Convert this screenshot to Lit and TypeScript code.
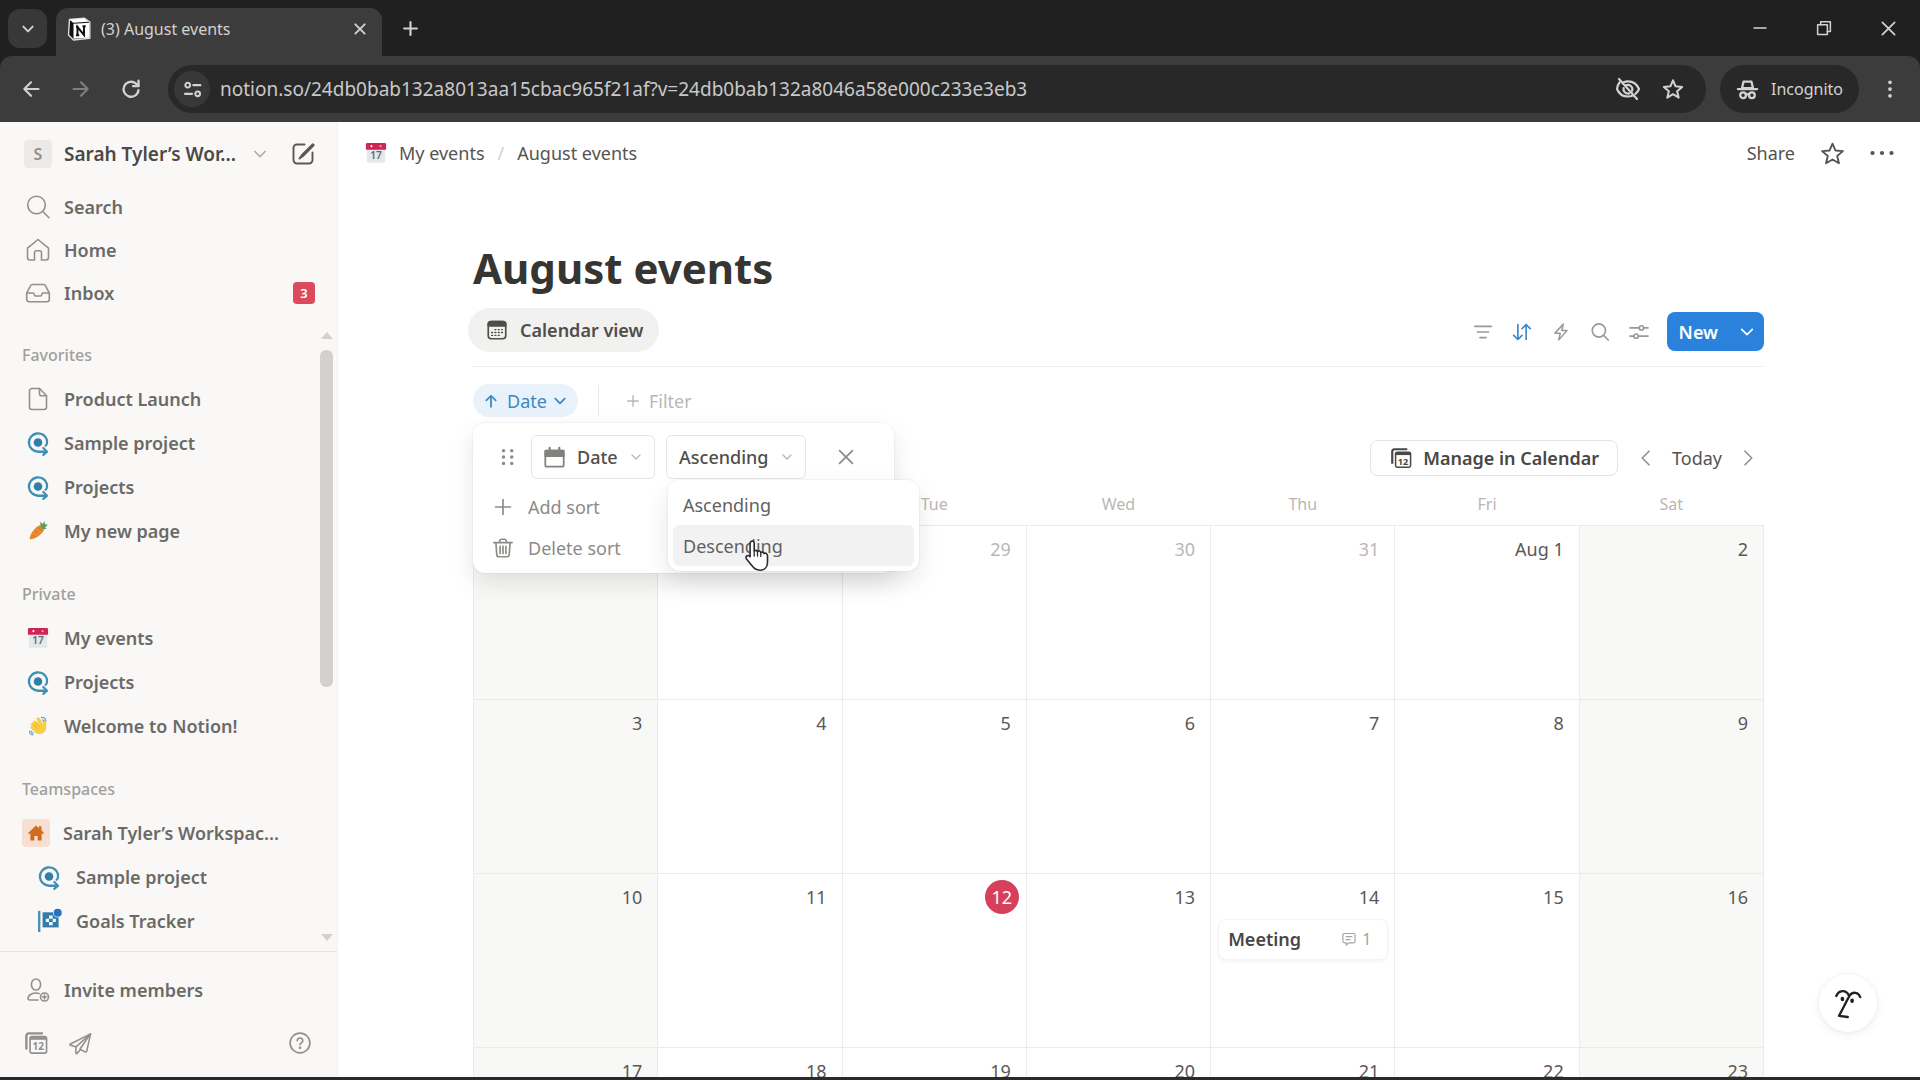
import { LitElement, html, css, svg, nothing, TemplateResult } from "lit";
import { customElement, property } from "lit/decorators.js";
import { classMap } from "lit/directives/class-map.js";

/* ---------- Icons: all drawn on a 24 x 24 grid ---------- */
const ICONS: Record<string, TemplateResult> = {
  chevron: svg`<path d="M4 8l8 8 8-8"/>`,
  left: svg`<path d="M16 3l-9 9 9 9"/>`,
  right: svg`<path d="M8 3l9 9-9 9"/>`,
  close: svg`<path d="M5 5l14 14M19 5L5 19"/>`,
  plus: svg`<path d="M12 3v18M3 12h18"/>`,
  back: svg`<path d="M21 12H4M12 4l-8 8 8 8"/>`,
  forward: svg`<path d="M3 12h17M12 4l8 8-8 8"/>`,
  reload: svg`<path d="M21 13.500a9 9 0 1 1-3-8L21 8"/><path d="M21 2v6.500h-6.500"/>`,
  tune: svg`<circle cx="6" cy="6.500" r="3"/><path d="M13 6.500h9M2.500 17.500h9"/><circle cx="18.500" cy="17.500" r="3"/>`,
  eyeOff: svg`<path d="M3.500 5.500C2 7.500 1.200 9.500 1 12c2 5 6 7.500 11 7.500 2 0 3.500-.4 5-1M8 5c1.200-.4 2.600-.6 4-.6 5 0 9 3 11 7.600-.8 2-2 3.600-3.600 4.900"/><path d="M10 8.300a4.500 4.500 0 0 1 6.200 5.300M7.600 11a4.500 4.500 0 0 0 5.600 5.400"/><path d="M3 2l18 20"/>`,
  star: svg`<path d="M12 2.500l2.800 6.600 7.200.6-5.500 4.700 1.700 7L12 17.700l-6.200 3.700 1.700-7L2 9.700l7.200-.6z"/>`,
  incognito: svg`<path d="M7.500 3h9l1.800 7.500H5.700z"/><path d="M1 11.500h22"/><circle cx="7" cy="18.500" r="3.300"/><circle cx="17" cy="18.500" r="3.300"/><path d="M10 18c1.200-.8 2.800-.8 4 0"/>`,
  minimize: svg`<path d="M4 12h16"/>`,
  restore: svg`<path d="M3.500 7.500h13v13h-13z"/><path d="M7.500 7.500v-4h13v13h-4"/>`,
  kebab: svg`<g fill="currentColor" stroke="none"><circle cx="12" cy="3" r="2.500"/><circle cx="12" cy="12" r="2.500"/><circle cx="12" cy="21" r="2.500"/></g>`,
  dots: svg`<g fill="currentColor" stroke="none"><circle cx="2.500" cy="12" r="2.100"/><circle cx="12" cy="12" r="2.100"/><circle cx="21.500" cy="12" r="2.100"/></g>`,
  compose: svg`<path d="M13.500 2.500H6A3.500 3.500 0 0 0 2.500 6v12A3.500 3.500 0 0 0 6 21.500h12a3.500 3.500 0 0 0 3.500-3.500v-7.500"/><path d="M21.800 2.200L11 13l-2.500 3.500L12 14 22.800 3.200z"/>`,
  search: svg`<circle cx="10.500" cy="10" r="8.800"/><path d="M16.800 16.500l6.200 6.200"/>`,
  home: svg`<path d="M1.500 10.200L12 1.500l10.500 8.700v9.100c0 1.600-1 2.700-2.600 2.700h-4.400v-7.500c0-1-.6-1.700-1.500-1.700h-4c-.9 0-1.500.7-1.500 1.700V22H4.100c-1.600 0-2.600-1.100-2.600-2.700z"/>`,
  inbox: svg`<path d="M.7 12l3.500-6.700A3 3 0 0 1 6.900 3.500h10.200a3 3 0 0 1 2.700 1.800l3.500 6.700v6.300a2.500 2.500 0 0 1-2.500 2.500H3.200A2.500 2.500 0 0 1 .7 18.300z"/><path d="M.7 12h6.800L9 15h6l1.500-3h6.800"/>`,
  page: svg`<path d="M13.500 1.500H6A2.500 2.500 0 0 0 3.500 4v16A2.500 2.500 0 0 0 6 22.500h12a2.500 2.500 0 0 0 2.500-2.500V8.800z"/><path d="M13.500 1.500v5.300a2 2 0 0 0 2 2h5"/>`,
  target: svg`<g stroke="#3f8fb5"><path d="M21.800 9A10 10 0 1 0 12 21.500h9" stroke-width="2.600"/><path d="M17.800 17.500l4 4-4 3.500M21.800 9.500V12a4 4 0 0 1-1.500 3" stroke-width="2.400"/></g><circle cx="12" cy="11.500" r="4.700" fill="#337ea9" stroke="none"/>`,
  carrot: svg`<g stroke="none"><path d="M14.500 4.800l5 5c-1 5-9.500 11.200-16.200 12.200-1 .1-1.500-.5-1.300-1.500C3.300 13.800 9.800 6.200 14.500 4.800z" fill="#ea8a2e"/><path d="M9 12l3 3M12.500 8l3 3M6 17l2 2" stroke="#c96a14" stroke-width="1"/><path d="M15 6.500L14.800 1l3 2.500L20 0l.5 4L24 4.500l-3.500 3 2 2-5.500.2z" fill="#5f9f52"/></g>`,
  wave: svg`<g stroke="none"><path d="M6 7.500l2-2.500 4 3-2-5.500 3-.9 5 7.100.9-3.300c2-.2 3 .8 3.100 3.500l-.2 6.500c-.8 5.100-8 8.500-13 4.700L2.600 14l1.600-2.200L3 10.300l1.700-2.100z" fill="#f7ce46"/><path d="M7 11l4.500 4.500M9 8.500l4.500 4.500" stroke="#dda92a" stroke-width="1"/></g><path d="M16 1.800c3-.3 5 1.300 5.500 4M17 4.500c1.200 0 2 .8 2.200 2M1.800 18c0 2.800 1.200 4.200 4 4.600M4 18c0 1.500.8 2.300 2.200 2.500" stroke="#6ea3c8" stroke-width="1.500"/>`,
  house: svg`<path d="M12 2l4 3.500V3h3.200v5.300L22.500 12l-1.300 1.500-1.700-1.200V22h-5.300v-6H9.800v6H4.500v-9.700l-1.700 1.200L1.500 12z" fill="#cf6d1c" stroke="none"/>`,
  flag: svg`<g stroke="none"><path d="M0 1h2.600v23H0z" fill="#4c8fb3"/><path d="M5 2.500h17.500v16.500H5z" fill="#337ea9"/><g fill="#f4f8fa"><path d="M8.500 9.500h3.500v3.500H8.500zM12 6h4v3.500h-4zM16 9.500h3.500v3.500H16zM12 13h4v3.500h-4z"/></g><circle cx="21.500" cy="3" r="5.200" fill="#f9f8f7"/><circle cx="21.500" cy="3" r="4.400" fill="#2a72c4"/></g>`,
  invite: svg`<ellipse cx="10" cy="6.500" rx="4.600" ry="5.500"/><path d="M13 15.500c-5.500-1.500-11 1-11 5 0 1 .6 1.500 1.700 1.500H12"/><circle cx="18.500" cy="19" r="4"/><path d="M18.500 17v4M16.500 19h4"/>`,
  send: svg`<path d="M22.500 2L1.500 12.500c-.7.400-.6 1 .1 1.300l5.600 1.700v6.300c0 .8.700 1 1.200.5l3.600-4 4.800 2.500c.8.400 1.500.1 1.700-.8L22.500 2z"/><path d="M22.500 2L7.200 15.500M22 2.500L11.500 17.800"/>`,
  help: svg`<circle cx="12" cy="12" r="10.800"/><path d="M9 9.600A3 3 0 0 1 15 9.500c0 2.300-3 2.400-3 4.500"/><circle cx="12" cy="17.300" r=".6" fill="currentColor"/>`,
  calendarView: svg`<rect x="1.500" y="2" width="21" height="20.500" rx="3.500"/><path d="M1.500 7V5.500A3.500 3.500 0 0 1 5 2h14a3.500 3.500 0 0 1 3.500 3.500V7z" fill="currentColor"/><path d="M9.500 11.500h1.200M13.500 11.500h1.200M17.500 11.500h1M5.500 15h1.200M9.500 15h1.200M13.500 15h1.200M17.500 15h1M5.500 18.500h1.200M9.500 18.500h1.200M13.500 18.500h1.200" stroke-width="1.600"/>`,
  calendar: svg`<rect x="1.500" y="4" width="21" height="18.500" rx="2"/><path d="M1.500 4h21v6.500h-21z" fill="currentColor"/><path d="M6.500 1v4M17.500 1v4" stroke-width="2.400"/>`,
  filter: svg`<path d="M1 4.500h22M4.500 12h15M8 19.500h8"/>`,
  sort: svg`<path d="M6.500 2v20M1 16.500L6.500 22l5.500-5.500M17.500 22V2M12 7.500L17.500 2 23 7.500"/>`,
  bolt: svg`<path d="M15 1.500L4 13.500h7L9 22.500l11-12.500h-7z"/>`,
  sliders: svg`<path d="M0 6.500h12M18.500 6.500H24M0 17.500h5M11.500 17.500H24"/><circle cx="15.200" cy="6.500" r="2.800"/><circle cx="8.200" cy="17.500" r="2.800"/>`,
  up: svg`<path d="M12 22V3M4 11l8-8 8 8"/>`,
  drag: svg`<g fill="currentColor" stroke="none"><circle cx="6" cy="3.500" r="2.300"/><circle cx="6" cy="12" r="2.300"/><circle cx="6" cy="20.500" r="2.300"/><circle cx="17" cy="3.500" r="2.300"/><circle cx="17" cy="12" r="2.300"/><circle cx="17" cy="20.500" r="2.300"/></g>`,
  trash: svg`<path d="M1 5.500h22M8 5.500V4a2.500 2.500 0 0 1 2.500-2.500h3A2.500 2.500 0 0 1 16 4v1.500M3.500 5.500l1 14.500A2.700 2.700 0 0 0 7.200 22.500h9.600a2.700 2.700 0 0 0 2.700-2.500l1-14.500M8.500 10v8.500M12 10v8.500M15.500 10v8.500"/>`,
  comment: svg`<path d="M4.500 2.500h15a3 3 0 0 1 3 3v10a3 3 0 0 1-3 3H12l-4.500 4v-4h-3a3 3 0 0 1-3-3v-10a3 3 0 0 1 3-3z"/><path d="M7 8h10M7 13h7"/>`,
  face: svg`<path d="M2 6C4 1 10 0 12.800 5.500M22.500 7C21 2.500 16 2 13.500 5.500 12 8 9 14 4.300 23l7.500 1" stroke-width="2"/><ellipse cx="7.200" cy="8.500" rx="1.600" ry="1.900" fill="currentColor" stroke="none"/><ellipse cx="15.500" cy="10" rx="1.600" ry="1.900" fill="currentColor" stroke="none"/>`,
};

const icon = (name: string, size = 24, stroke = 1.6) => html`<svg
  width=${size} height=${size} viewBox="0 0 24 24" fill="none" stroke="currentColor"
  stroke-width=${stroke} stroke-linecap="round" stroke-linejoin="round"
  overflow="visible" aria-hidden="true">${ICONS[name]}</svg>`;

/* Icons that carry a day number */
const datedIcon = (size: number) => html`<svg width=${size} height=${size} viewBox="0 0 24 24"
  fill="none" stroke="currentColor" stroke-width="1.800" overflow="visible" aria-hidden="true">
  <path d="M1.500 19V4a2.500 2.500 0 0 1 2.500-2.500h15.500" stroke-width="2.600" />
  <rect x="5.500" y="5" width="18" height="18" rx="2" />
  <path d="M5.500 7h18" stroke-width="3" />
  <text x="14.500" y="20" text-anchor="middle" font-size="11" font-weight="700"
    font-family="Noto Sans, sans-serif" fill="currentColor" stroke="none">12</text></svg>`;

const dateEmoji = () => html`<svg width="22" height="22" viewBox="0 0 24 24" aria-hidden="true">
  <path d="M2 7h20v14a1.500 1.500 0 0 1-1.500 1.500h-17A1.500 1.500 0 0 1 2 21z" fill="#e3e8ea" />
  <path d="M1 2.500A1.500 1.500 0 0 1 2.500 1h19A1.500 1.500 0 0 1 23 2.500V8.500H1z" fill="#cf2653" />
  <circle cx="7" cy="4.500" r="1.100" fill="#fff" /><circle cx="17" cy="4.500" r="1.100" fill="#f2a9bb" />
  <text x="12" y="19" text-anchor="middle" font-size="11" font-weight="600"
    font-family="Noto Sans, sans-serif" fill="#5e6b70">17</text></svg>`;

const notionLogo = () => html`<svg width="24" height="24" viewBox="0 0 24 24" aria-hidden="true">
  <path d="M2.500 2.500L17.500 1.200 22.800 5v16.300L6.500 23 1.500 18z" fill="#111" stroke="#ddd" stroke-width="1.400" stroke-linejoin="round" />
  <path d="M6.500 6.700L22 5.700v15L6.500 21.700z" fill="#fff" />
  <path d="M2.500 2.500L17.500 1.500 21.500 4.700 6.200 5.700z" fill="#fff" />
  <path d="M10.500 18V10l6.500 8V9.500M9 9.800h2.500M9 18.200h3.200M15.500 9.200h3.200" fill="none" stroke="#111" stroke-width="2" /></svg>`;

const FONT = css`
  :host { box-sizing: border-box; font-family: "Noto Sans", "Open Sans", sans-serif; }
  * { box-sizing: border-box; }
  svg { display: block; flex: none; }
  button, input, select {
    font: inherit; color: inherit; background: none; border: 0;
    padding: 0; margin: 0; outline: none;
  }
  button { display: flex; align-items: center; justify-content: center; white-space: nowrap; }
  a { color: inherit; text-decoration: none; }
`;

@customElement("browser-bar")
class BrowserBar extends LitElement {
  static styles = [FONT, css`
    :host { display: block; background: #202020; color: #d2d2d2; }
    .strip { display: flex; align-items: flex-end; height: 56px; padding-left: 8px; }
    .tabs-menu { width: 39px; height: 39px; margin-bottom: 8px; border-radius: 12px; background: #383838; }
    .tab {
      display: flex; align-items: center; width: 326px; height: 48px; margin-left: 9px;
      padding: 0 14px 6px 11px; border-radius: 12px 12px 0 0; background: #3c3c3c; font-size: 16px;
    }
    .title { flex: 1; margin-left: 10px; }
    .new-tab { width: 40px; height: 40px; margin: 0 0 8px 8px; }
    .window { display: flex; margin-left: auto; height: 56px; padding-bottom: 0; }
    .window button { width: 64px; }
    .tools {
      display: flex; align-items: center; height: 66px; padding: 0 11px 0 6px;
      background: #3c3c3c; border-radius: 12px 12px 0 0;
    }
    .nav { width: 50px; height: 44px; }
    .off { color: #7e7e7e; }
    .address {
      flex: 1; display: flex; align-items: center; height: 48px; margin-left: 12px;
      padding: 0 22px 0 6px; border-radius: 24px; background: #282828;
    }
    .site { width: 36px; height: 36px; border-radius: 18px; background: #383838; }
    .url { flex: 1; margin: 0 12px 0 10px; font-size: 19px; color: #c8c8c8; }
    .address button + button { margin-left: 22px; }
    .incognito {
      display: flex; align-items: center; gap: 13px; height: 48px; margin-left: 14px;
      padding: 0 16px 0 17px; border-radius: 24px; background: #282828; font-size: 16px;
    }
    .menu { width: 38px; height: 40px; margin-left: 12px; }
  `];

  render() {
    return html`
      <div class="strip">
        <button class="tabs-menu" aria-label="Search tabs">${icon("chevron", 14, 3.4)}</button>
        <div class="tab">
          ${notionLogo()}<span class="title">(3) August events</span>
          <button aria-label="Close tab">${icon("close", 16, 2.8)}</button>
        </div>
        <button class="new-tab" aria-label="New tab">${icon("plus", 17, 3)}</button>
        <div class="window">
          <button aria-label="Minimize">${icon("minimize", 18, 1.8)}</button>
          <button aria-label="Restore">${icon("restore", 18, 2)}</button>
          <button aria-label="Close">${icon("close", 21, 2)}</button>
        </div>
      </div>
      <div class="tools">
        <button class="nav" aria-label="Back">${icon("back", 20, 2.6)}</button>
        <button class="nav off" aria-label="Forward">${icon("forward", 20, 2.6)}</button>
        <button class="nav" aria-label="Reload">${icon("reload", 20, 2.8)}</button>
        <div class="address">
          <button class="site" aria-label="Site information">${icon("tune", 19, 2.6)}</button>
          <input class="url" type="text" aria-label="Address"
            .value=${"notion.so/24db0bab132a8013aa15cbac965f21af?v=24db0bab132a8046a58e000c233e3eb3"} />
          <button aria-label="Tracking blocked">${icon("eyeOff", 24, 2.2)}</button>
          <button aria-label="Bookmark">${icon("star", 22, 2.2)}</button>
        </div>
        <div class="incognito">${icon("incognito", 21, 2.6)}Incognito</div>
        <button class="menu" aria-label="Menu">${icon("kebab", 18)}</button>
      </div>`;
  }
}

interface Entry { icon: string; label: string; kind?: string }
const TOP: Entry[] = [
  { icon: "search", label: "Search" },
  { icon: "home", label: "Home" },
  { icon: "inbox", label: "Inbox", kind: "badge" },
];
const SECTIONS: { title: string; items: Entry[] }[] = [
  { title: "Favorites", items: [
    { icon: "page", label: "Product Launch" },
    { icon: "target", label: "Sample project" },
    { icon: "target", label: "Projects" },
    { icon: "carrot", label: "My new page" },
  ] },
  { title: "Private", items: [
    { icon: "date", label: "My events" },
    { icon: "target", label: "Projects" },
    { icon: "wave", label: "Welcome to Notion!" },
  ] },
  { title: "Teamspaces", items: [
    { icon: "house", label: "Sarah Tyler’s Workspac...", kind: "team" },
    { icon: "target", label: "Sample project", kind: "nested" },
    { icon: "flag", label: "Goals Tracker", kind: "nested" },
  ] },
];

@customElement("side-bar")
class SideBar extends LitElement {
  static styles = [FONT, css`
    :host {
      display: flex; flex-direction: column; width: 338px; flex: none; min-height: 0;
      background: #f9f8f7; border-right: 1px solid #f3f2f0; color: #6b6a67;
      font-size: 18px; font-weight: 600;
    }
    .workspace { display: flex; align-items: center; height: 63px; padding: 0 22px 0 24px; }
    .letter {
      display: grid; place-items: center; width: 28px; height: 28px; margin-right: 12px;
      border-radius: 4px; background: #ebeae8; color: #91908d; font-size: 16px;
    }
    .name { flex: 1; color: #4a4946; justify-content: flex-start; font-size: 19px; }
    .pale { color: #a5a4a1; }
    .compose { margin-left: 23px; color: #5a5956; }
    .row { display: flex; align-items: center; gap: 14px; height: 44px; padding: 0 22px 0 26px; }
    .top .row { height: 43px; }
    .glyph { display: grid; place-items: center; width: 24px; height: 24px; color: #91908d; }
    .label { flex: 1; white-space: nowrap; }
    .badge {
      display: grid; place-items: center; width: 22px; height: 22px; border-radius: 4px;
      background: #dd4a5e; color: #fff; font-size: 13px;
    }
    .team { padding-left: 22px; gap: 13px; }
    .team .glyph { width: 28px; height: 28px; border-radius: 4px; background: #f6dfd0; }
    .nested { padding-left: 37px; gap: 15px; }
    .scroll { display: flex; flex: 1; min-height: 0; padding-right: 4px; border-bottom: 1px solid #e4e3e0; }
    .lists { flex: 1; min-width: 0; overflow: hidden; }
    .section { margin: 19px 0; }
    .section + .section { margin-top: 0; }
    .heading {
      display: flex; align-items: center; height: 44px; margin: 0; padding-left: 22px;
      font-size: 16px; font-weight: 500; color: #a09f9c;
    }
    .bar { display: flex; flex-direction: column; align-items: center; width: 13px; padding: 18px 0 10px; gap: 11px; }
    .arrow { border: 6px solid transparent; border-top-width: 0; border-bottom: 7px solid #d3d1cd; }
    .arrow.down { border-bottom-width: 0; border-top: 7px solid #d3d1cd; }
    .thumb { flex: 3; width: 13px; border-radius: 6px; background: #d3d1cd; }
    .rest { flex: 2; }
    .footer { padding: 16px 0 13px; }
    .links { display: flex; align-items: center; height: 42px; margin-top: 10px; padding: 0 26px 0 25px; gap: 22px; color: #91908d; }
    .help { margin-left: auto; }
  `];

  private row(e: Entry) {
    const sizes: Record<string, number> = { house: 18, target: 22, flag: 22, carrot: 20, wave: 20 };
    return html`<a class=${classMap({ row: true, [e.kind ?? "plain"]: e.kind !== "badge" })} href="#">
      <span class="glyph">${e.icon === "date" ? dateEmoji() : icon(e.icon, sizes[e.icon] ?? 24)}</span>
      <span class="label">${e.label}</span>
      ${e.kind === "badge" ? html`<span class="badge">3</span>` : nothing}
    </a>`;
  }

  render() {
    return html`
      <div class="workspace">
        <span class="letter">S</span>
        <button class="name">Sarah Tyler’s Wor...</button>
        <span class="pale">${icon("chevron", 16, 2)}</span>
        <button class="compose" aria-label="New page">${icon("compose", 24, 1.9)}</button>
      </div>
      <nav class="top">${TOP.map((e) => this.row(e))}</nav>
      <div class="scroll">
        <div class="lists">
          ${SECTIONS.map((s) => html`<section class="section">
            <h2 class="heading">${s.title}</h2>
            ${s.items.map((e) => this.row(e))}
          </section>`)}
        </div>
        <div class="bar">
          <span class="arrow"></span><span class="thumb"></span>
          <span class="rest"></span><span class="arrow down"></span>
        </div>
      </div>
      <div class="footer">
        ${this.row({ icon: "invite", label: "Invite members" })}
        <div class="links">
          <button aria-label="Calendar">${datedIcon(22)}</button>
          <button aria-label="Mail">${icon("send", 23)}</button>
          <button class="help" aria-label="Help">${icon("help", 22, 1.8)}</button>
        </div>
      </div>`;
  }
}

const DAYS = ["Sun", "Mon", "Tue", "Wed", "Thu", "Fri", "Sat"];

@customElement("month-grid")
class MonthGrid extends LitElement {
  @property({ type: Number }) today = 12;
  /* Leading weekday names left out while the sort popup lies over them */
  @property({ type: Number }) covered = 0;

  static styles = [FONT, css`
    :host { display: block; flex: 1; min-height: 0; overflow: hidden; }
    .grid { width: 100%; table-layout: fixed; border-collapse: collapse; }
    th { height: 41px; padding: 0; font-size: 16px; font-weight: 400; color: #b8b7b4; }
    td {
      height: 174px; padding: 6px 0 0; vertical-align: top;
      border: 1px solid #ebebea; font-size: 18px; color: #5a5956;
    }
    .weekend { background: #f8f8f7; }
    .past { color: #b8b7b4; }
    .day { display: flex; justify-content: flex-end; height: 34px; padding-right: 15px; line-height: 34px; }
    .today .number {
      width: 34px; margin-right: -8px; border-radius: 17px;
      background: #d6405a; color: #fff; text-align: center;
    }
    .event {
      display: flex; align-items: center; height: 39px; margin: 6px 7px 0 8px; padding: 0 16px 0 9px;
      border-radius: 6px; background: #fff; color: #484744; font-weight: 600;
      box-shadow: 0 0 0 1px #f4f3f2, 0 2px 4px #00000010;
    }
    .replies { display: flex; align-items: center; gap: 6px; margin-left: auto; font-size: 16px; font-weight: 400; color: #a5a4a1; }
  `];

  private cell(index: number) {
    const day = index - 4;
    const label = day < 1 ? `${31 + day}` : day === 1 ? "Aug 1" : `${day}`;
    const column = index % 7;
    return html`<td class=${classMap({
      weekend: column === 0 || column === 6, past: day < 1, today: day === this.today,
    })}>
      <div class="day"><span class="number">${label}</span></div>
      ${day === 14 ? html`<a class="event" href="#">Meeting<span class="replies">${icon("comment", 14, 2)}1</span></a>` : nothing}
    </td>`;
  }

  render() {
    return html`<table class="grid">
      <thead><tr>${DAYS.map((d, i) => html`<th scope="col" aria-label=${d}>${i < this.covered ? nothing : d}</th>`)}</tr></thead>
      <tbody>${[0, 1, 2, 3].map((w) => html`<tr>${DAYS.map((_, c) => this.cell(w * 7 + c))}</tr>`)}</tbody>
    </table>`;
  }
}

@customElement("sort-popup")
class SortPopup extends LitElement {
  static styles = [FONT, css`
    :host {
      display: block; width: 421px; padding: 12px 16px 5px; border-radius: 12px; background: #fff;
      box-shadow: 0 0 0 1px #00000008, 0 10px 24px #0000001a; font-size: 18px; color: #8c8b88;
    }
    .rule { display: flex; align-items: center; height: 44px; padding-left: 10px; }
    .handle { margin-right: 14px; }
    .box {
      position: relative; display: flex; align-items: center; height: 44px; margin-right: 11px;
      border: 1px solid #e6e5e3; border-radius: 6px; color: #4f4e4b; font-weight: 500;
    }
    .box select { appearance: none; height: 42px; padding: 0 12px; }
    .property { width: 124px; }
    .property select { width: 122px; padding-left: 45px; }
    .direction { width: 140px; }
    .direction select { width: 138px; }
    .lead, .tail { position: absolute; pointer-events: none; }
    .lead { left: 12px; color: #82817e; }
    .tail { right: 12px; color: #b8b7b4; }
    .remove { width: 44px; height: 44px; margin-left: 7px; }
    .action { gap: 15px; height: 41px; padding-left: 4px; justify-content: flex-start; }
    .rule + .action { margin-top: 7px; }
    .menu {
      position: absolute; left: 195px; top: 57px; width: 251px; padding: 4px 5px 5px;
      border-radius: 12px; background: #fff; color: #62615e;
      box-shadow: 0 0 0 1px #00000008, 0 10px 24px #0000001a;
    }
    .choice { width: 100%; height: 41px; padding-left: 10px; justify-content: flex-start; border-radius: 6px; }
    .hover { background: #f3f2f2; }
    .pointer { position: absolute; left: 76px; top: 59px; }
  `];

  render() {
    return html`
      <div class="rule">
        <button class="handle" aria-label="Reorder">${icon("drag", 18)}</button>
        <label class="box property">
          <span class="lead">${icon("calendar", 21, 2)}</span>
          <select aria-label="Sort property"><option>Date</option></select>
          <span class="tail">${icon("chevron", 12, 2.6)}</span>
        </label>
        <label class="box direction">
          <select aria-label="Sort direction"><option>Ascending</option></select>
          <span class="tail">${icon("chevron", 12, 2.6)}</span>
        </label>
        <button class="remove" aria-label="Remove sort">${icon("close", 22, 1.9)}</button>
      </div>
      <button class="action">${icon("plus", 20, 2)}Add sort</button>
      <button class="action">${icon("trash", 20, 2)}Delete sort</button>
      <div class="menu">
        <button class="choice">Ascending</button>
        <button class="choice hover">Descending</button>
        <svg class="pointer" width="26" height="32" viewBox="0 0 26 32" aria-hidden="true">
          <path d="M7 2.500c1.500-1 3.200 0 3.200 1.700V12c.8-1 2.700-.9 3.300.5 1-.9 2.800-.5 3.300.9 1-.8 2.700-.3 3.200 1 1.800-.7 3.500.4 3.500 2.300v6.500c0 4.800-3 8-7.500 8-3.700 0-6-1.300-8-4.500L2.500 20c-.8-1.400-.4-2.700.6-3.300 1-.5 2-.2 3 .9V4.200c0-.8.300-1.400.9-1.700z"
            fill="#fff" stroke="#2b2b2b" stroke-width="1.600" stroke-linejoin="round" />
          <path d="M10.200 12v5M13.500 12.500v4.500M16.800 13.400v4" stroke="#2b2b2b" stroke-width="1.300" stroke-linecap="round" />
        </svg>
      </div>`;
  }
}

@customElement("app-root")
class AppRoot extends LitElement {
  static styles = [FONT, css`
    :host {
      display: flex; flex-direction: column; height: 100vh; overflow: hidden;
      background: #fff; color: #484744; font-size: 18px; border-bottom: 3px solid #2a2a2a;
    }
    .body { display: flex; flex: 1; min-height: 0; }
    main { position: relative; display: flex; flex-direction: column; flex: 1; min-width: 0; }
    .topbar { display: flex; align-items: center; flex: none; height: 62px; padding: 0 26px 0 27px; color: #555451; }
    .crumb { display: flex; align-items: center; gap: 12px; }
    .slash { margin: 0 13px; color: #d3d1cd; }
    .actions { display: flex; align-items: center; gap: 25px; margin-left: auto; }
    .content { display: flex; flex-direction: column; flex: 1; min-height: 0; padding: 56px 156px 0 135px; }
    h1 { margin: 0; font-size: 42px; line-height: 56px; font-weight: 700; color: #363532; }
    .tabs { display: flex; align-items: center; flex: none; height: 71px; padding-bottom: 3px; border-bottom: 1px solid #ededeb; }
    .view {
      height: 44px; margin-left: -5px; padding: 0 16px 0 19px; gap: 13px;
      border-radius: 22px; background: #f1f1f0; font-weight: 600; color: #4f4e4b;
    }
    .controls { display: flex; align-items: center; gap: 19px; margin-left: auto; padding-top: 4px; }
    .tools { display: flex; gap: 21px; color: #9a9996; }
    .blue { color: #3a88d0; }
    .new {
      display: flex; height: 39px; border-radius: 8px; background: #2a82dc; color: #fff;
      font-weight: 600; overflow: hidden;
    }
    .new button { padding: 0 11px 0 12px; }
    .new button + button { width: 35px; padding: 0; }
    .filters { position: relative; display: flex; align-items: center; flex: none; height: 33px; margin-top: 17px; }
    .chip { gap: 9px; height: 33px; padding: 0 11px; border-radius: 17px; background: #e9f2fb; color: #3a88c4; }
    .chip svg:last-child { margin-left: -3px; }
    .rule { width: 1px; height: 31px; margin: 0 27px 0 20px; background: #e9e8e6; }
    .add { gap: 9px; color: #b8b7b4; }
    sort-popup { position: absolute; left: 0; top: 39px; z-index: 2; }
    .calendar-tools { display: flex; justify-content: flex-end; align-items: center; flex: none; height: 36px; margin: 23px 0 8px; padding-right: 5px; }
    .manage {
      height: 36px; gap: 12px; padding: 0 18px 0 20px; margin-right: 17px;
      border: 1px solid #e6e5e3; border-radius: 8px; font-weight: 600;
    }
    .step { width: 22px; height: 32px; color: #91908d; }
    .now { margin: 0 15px; color: #555451; }
    .assistant {
      position: absolute; right: 43px; bottom: 45px; width: 58px; height: 58px; border-radius: 50%;
      background: #fff; color: #222; box-shadow: 0 0 0 1px #00000005, 0 2px 8px #00000014;
    }
  `];

  render() {
    return html`
      <browser-bar></browser-bar>
      <div class="body">
        <side-bar></side-bar>
        <main>
          <header class="topbar">
            <a class="crumb" href="#">${dateEmoji()}My events</a>
            <span class="slash">/</span>
            <a class="crumb" href="#">August events</a>
            <div class="actions">
              <button>Share</button>
              <button aria-label="Favorite">${icon("star", 25, 1.8)}</button>
              <button aria-label="More">${icon("dots", 24)}</button>
            </div>
          </header>
          <div class="content">
            <h1>August events</h1>
            <div class="tabs">
              <button class="view">${icon("calendarView", 20, 2)}Calendar view</button>
              <div class="controls">
                <div class="tools">
                  <button aria-label="Filter">${icon("filter", 18, 2.2)}</button>
                  <button class="blue" aria-label="Sort">${icon("sort", 18, 2.2)}</button>
                  <button aria-label="Automations">${icon("bolt", 18, 2)}</button>
                  <button aria-label="Search">${icon("search", 18, 2.2)}</button>
                  <button aria-label="Settings">${icon("sliders", 18, 2.2)}</button>
                </div>
                <div class="new">
                  <button>New</button>
                  <button aria-label="More options">${icon("chevron", 16, 2.6)}</button>
                </div>
              </div>
            </div>
            <div class="filters">
              <button class="chip">${icon("up", 14, 3)}Date${icon("chevron", 14, 3)}</button>
              <span class="rule"></span>
              <button class="add">${icon("plus", 14, 2.4)}Filter</button>
              <sort-popup></sort-popup>
            </div>
            <div class="calendar-tools">
              <button class="manage">${datedIcon(20)}Manage in Calendar</button>
              <button class="step" aria-label="Previous month">${icon("left", 18, 2.2)}</button>
              <button class="now">Today</button>
              <button class="step" aria-label="Next month">${icon("right", 18, 2.2)}</button>
            </div>
            <month-grid covered="2"></month-grid>
          </div>
          <button class="assistant" aria-label="Ask AI">${icon("face", 28)}</button>
        </main>
      </div>`;
  }
}
